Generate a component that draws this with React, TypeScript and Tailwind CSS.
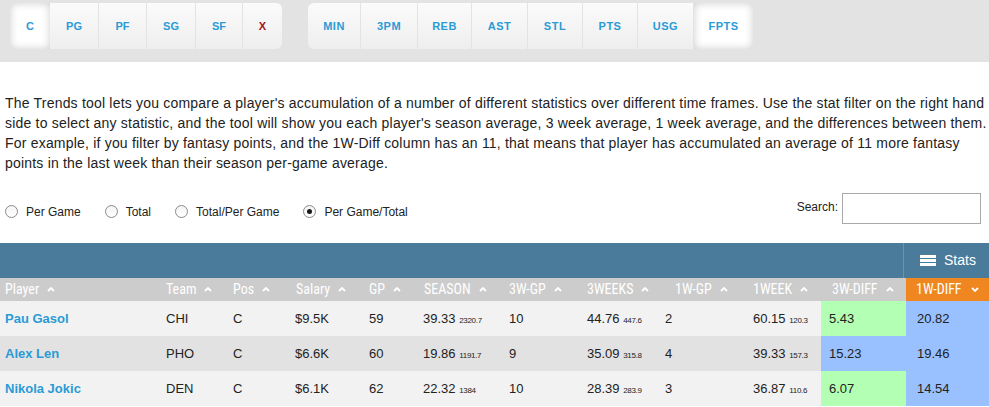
import React, { useState } from 'react';

const posButtons = [
  { label: 'C', w: 'w-[40px]' },
  { label: 'PG', w: 'w-[49px]' },
  { label: 'PF', w: 'w-[48px]' },
  { label: 'SG', w: 'w-[49px]' },
  { label: 'SF', w: 'w-[47px]' },
  { label: 'X', w: 'w-[39px]' },
];

const statButtons = [
  { label: 'MIN', w: 'w-[53px]' },
  { label: '3PM', w: 'w-[57px]' },
  { label: 'REB', w: 'w-[54px]' },
  { label: 'AST', w: 'w-[56px]' },
  { label: 'STL', w: 'w-[55px]' },
  { label: 'PTS', w: 'w-[55px]' },
  { label: 'USG', w: 'w-[56px]' },
  { label: 'FPTS', w: 'w-[59px]' },
];

const columns = [
  'Player', 'Team', 'Pos', 'Salary', 'GP', 'SEASON', '3W-GP', '3WEEKS', '1W-GP', '1WEEK', '3W-DIFF',
];

const rows = [
  {
    name: 'Pau Gasol', team: 'CHI', pos: 'C', salary: '$9.5K', gp: '59',
    season: ['39.33', '2320.7'], gp3: '10', weeks3: ['44.76', '447.6'], gp1: '2', week1: ['60.15', '120.3'],
    diff3: '5.43', diff3Up: true, diff1: '20.82', bg: 'bg-[#f2f2f2]',
  },
  {
    name: 'Alex Len', team: 'PHO', pos: 'C', salary: '$6.6K', gp: '60',
    season: ['19.86', '1191.7'], gp3: '9', weeks3: ['35.09', '315.8'], gp1: '4', week1: ['39.33', '157.3'],
    diff3: '15.23', diff3Up: false, diff1: '19.46', bg: 'bg-[#e2e2e2]',
  },
  {
    name: 'Nikola Jokic', team: 'DEN', pos: 'C', salary: '$6.1K', gp: '62',
    season: ['22.32', '1384'], gp3: '10', weeks3: ['28.39', '283.9'], gp1: '3', week1: ['36.87', '110.6'],
    diff3: '6.07', diff3Up: true, diff1: '14.54', bg: 'bg-[#f2f2f2]',
  },
];

const grid = 'grid grid-cols-[161px_67px_63px_73px_55px_85px_78px_82px_84px_73px_85px_83px]';

const Chevron = ({ down = false }: { down?: boolean }) => (
  <svg width="8" height="5" viewBox="0 0 8 5" className="shrink-0">
    <path
      d={down ? 'M1 1 L4 4 L7 1' : 'M1 4 L4 1 L7 4'}
      fill="none"
      stroke="white"
      strokeWidth="1.8"
    />
  </svg>
);

const Radio = ({ label, checked, onClick }: { label: string; checked: boolean; onClick: () => void }) => (
  <label className="flex items-center gap-[8px] cursor-pointer" onClick={onClick}>
    <span className="w-[13px] h-[13px] rounded-full border border-[#8a8a8a] bg-gradient-to-b from-[#f4f4f4] to-white flex items-center justify-center">
      {checked && <span className="w-[5px] h-[5px] rounded-full bg-[#1a1a1a]" />}
    </span>
    <span className="text-[12px] text-[#222]">{label}</span>
  </label>
);

const Num = ({ v }: { v: string[] }) => (
  <span>
    {v[0]} <span className="text-[8px] tracking-[-0.3px]">{v[1]}</span>
  </span>
);

const App: React.FC = () => {
  const [pos, setPos] = useState('C');
  const [stat, setStat] = useState('FPTS');
  const [mode, setMode] = useState('Per Game/Total');

  const btnClass = (active: boolean) =>
    active
      ? 'bg-white shadow-[inset_0_0_9px_rgba(0,0,0,0.2)]'
      : 'bg-gradient-to-b from-[#fbfbfb] to-[#eeeeee] border-r border-[#e3e3e3] last:border-r-0';

  return (
    <div className="w-[989px] h-[407px] overflow-hidden bg-white font-['Liberation_Sans',Arial,sans-serif] text-[#222]">
      {/* Filter bar */}
      <div className="h-[62px] bg-[#e3e3e3] flex items-start gap-[26px] pt-[3px] pl-[10px]">
        <div className="flex h-[46px] rounded-[6px] overflow-hidden">
          {posButtons.map(b => (
            <button
              key={b.label}
              onClick={() => setPos(b.label)}
              className={`${b.w} h-full flex items-center justify-center text-[11px] font-bold ${b.label === 'X' ? 'text-[#a31515]' : 'text-[#2a9bd5]'} ${btnClass(pos === b.label)}`}
            >
              {b.label}
            </button>
          ))}
        </div>
        <div className="flex h-[46px] rounded-[6px] overflow-hidden">
          {statButtons.map(b => (
            <button
              key={b.label}
              onClick={() => setStat(b.label)}
              className={`${b.w} h-full flex items-center justify-center text-[11px] font-bold tracking-[0.5px] text-[#2a9bd5] ${btnClass(stat === b.label)}`}
            >
              {b.label}
            </button>
          ))}
        </div>
      </div>

      {/* Description */}
      <p className="mt-[31px] pl-[5px] text-[14px] leading-[20px] tracking-[0.2px] text-[#222]">
        The Trends tool lets you compare a player's accumulation of a number of different statistics over different time frames. Use the stat filter on the right hand side to select any statistic, and the tool will show you each player's season average, 3 week average, 1 week average, and the differences between them. For example, if you filter by fantasy points, and the 1W-Diff column has an 11, that means that player has accumulated an average of 11 more fantasy points in the last week than their season per-game average.
      </p>

      {/* Options row */}
      <div className="mt-[20px] h-[31px] flex justify-between pl-[5px] pr-[8px]">
        <div className="mt-[12px] h-[13px] flex items-center gap-[24px]">
          {['Per Game', 'Total', 'Total/Per Game', 'Per Game/Total'].map(m => (
            <Radio key={m} label={m} checked={mode === m} onClick={() => setMode(m)} />
          ))}
        </div>
        <div className="flex items-start gap-[4px]">
          <span className="text-[12px] mt-[5px]">Search:</span>
          <input className="w-[139px] h-[31px] border border-[#a9a9a9] bg-white outline-none px-1 text-[13px]" />
        </div>
      </div>

      {/* Table */}
      <div className="mt-[19px]">
        <div className="h-[35px] bg-[#4b7b9a] flex justify-end">
          <div className="w-[86px] border-l border-[#6b93ae] flex items-center pl-[16px] gap-[8px] text-white">
            <span className="flex flex-col gap-[1px]">
              <span className="block w-[16px] h-[3px] bg-white" />
              <span className="block w-[16px] h-[3px] bg-white" />
              <span className="block w-[16px] h-[3px] bg-white" />
            </span>
            <span className="text-[14px]">Stats</span>
          </div>
        </div>

        <div className={`${grid} h-[23px] bg-[#cccccc] text-white text-[14px] font-['Liberation_Sans_Narrow','Roboto_Condensed',Roboto,sans-serif]`}>
          {columns.map((c, i) => (
            <div
              key={c}
              className={`flex items-center gap-[8px] ${i === 8 || i === 10 ? 'pl-[11px]' : 'pl-[5px]'}`}
            >
              {c}
              <Chevron />
            </div>
          ))}
          <div className="flex items-center gap-[9px] pl-[10px] bg-[#f0861f]">
            1W-DIFF
            <Chevron down />
          </div>
        </div>

        {rows.map(r => (
          <div key={r.name} className={`${grid} h-[35px] text-[13px] ${r.bg}`}>
            <div className="flex items-center pl-[5px] font-bold text-[#2a9bd5]">{r.name}</div>
            <div className="flex items-center pl-[5px]">{r.team}</div>
            <div className="flex items-center pl-[5px]">{r.pos}</div>
            <div className="flex items-center pl-[4px]">{r.salary}</div>
            <div className="flex items-center pl-[5px]">{r.gp}</div>
            <div className="flex items-center pl-[4px]"><Num v={r.season} /></div>
            <div className="flex items-center pl-[5px]">{r.gp3}</div>
            <div className="flex items-center pl-[5px]"><Num v={r.weeks3} /></div>
            <div className="flex items-center pl-[1px]">{r.gp1}</div>
            <div className="flex items-center pl-[5px]"><Num v={r.week1} /></div>
            <div className={`flex items-center pl-[8px] ${r.diff3Up ? 'bg-[#b3ffb3]' : 'bg-[#99c1ff]'}`}>{r.diff3}</div>
            <div className="flex items-center pl-[11px] bg-[#99c1ff]">{r.diff1}</div>
          </div>
        ))}
      </div>
    </div>
  );
};

export default App;
